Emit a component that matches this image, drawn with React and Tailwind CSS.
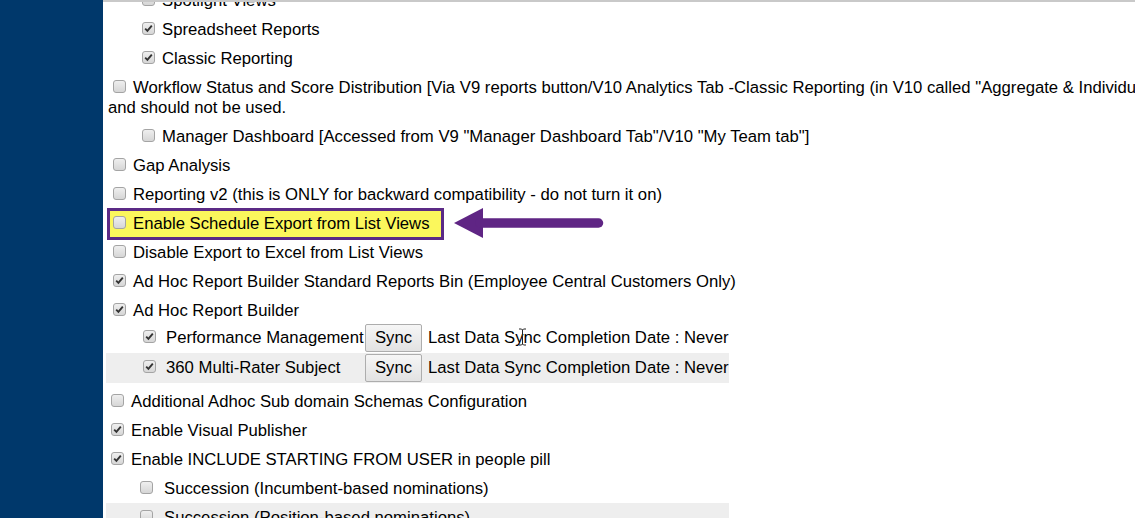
import React from "react";

function Box({ checked, className = "" }) {
  return (
    <span
      className={`inline-flex shrink-0 items-center justify-center w-[13px] h-[13px] rounded-[3px] border border-[#a4a4a4] bg-gradient-to-b from-[#efefef] to-[#d6d6d6] mb-[3px] ${className}`}
    >
      {checked && (
        <svg width="9" height="9" viewBox="0 0 9 9">
          <path d="M1.2 4.6 L3.4 6.8 L7.8 1.6" fill="none" stroke="#333" strokeWidth="1.9" />
        </svg>
      )}
    </span>
  );
}

function Row({ box, gap, checked, children, className = "" }) {
  return (
    <div className={`flex items-center h-[29px] whitespace-nowrap ${className}`}>
      <Box checked={checked} className={box} />
      <span className={gap}>{children}</span>
    </div>
  );
}

function SyncRow({ label, bg }) {
  return (
    <div className={`flex items-center h-[30px] -ml-[2px] w-[623px] whitespace-nowrap ${bg}`}>
      <Box checked className="ml-[37px]" />
      <span className="ml-[10px] w-[199px]">{label}</span>
      <button className="w-[57px] h-[28px] rounded-[2px] border border-[#adadad] bg-gradient-to-b from-[#f6f6f6] to-[#e2e2e2] text-[16.7px] text-black">
        Sync
      </button>
      <span className="ml-[6px]">Last Data Sync Completion Date : Never</span>
    </div>
  );
}

export default function App() {
  return (
    <div className="w-[1135px] h-[518px] overflow-hidden flex bg-white text-black text-[16.7px] leading-[20px] font-['Liberation_Sans',Arial,sans-serif]">
      <div className="w-[103px] shrink-0 bg-[#00386b]" />
      <div className="relative flex-1 overflow-hidden border-t-2 border-[#c9c9c9] pl-[5px]">
        <div className="-mt-[16px] flex flex-col">
          <Row box="ml-[34px]" gap="ml-[7px]">Spotlight Views</Row>
          <Row box="ml-[34px]" gap="ml-[7px]" checked>Spreadsheet Reports</Row>
          <Row box="ml-[34px]" gap="ml-[7px]" checked>Classic Reporting</Row>
          <div className="h-[49px] pt-[4.5px] whitespace-nowrap">
            <div className="flex items-center h-[20px]">
              <Box className="ml-[5px]" />
              <span className="ml-[7px]">
                Workflow Status and Score Distribution [Via V9 reports button/V10 Analytics Tab -Classic Reporting (in V10 called "Aggregate &amp; Individual Reports")] is deprecated
              </span>
            </div>
            <div className="h-[20px]">and should not be used.</div>
          </div>
          <Row box="ml-[34px]" gap="ml-[7px]">
            Manager Dashboard [Accessed from V9 "Manager Dashboard Tab"/V10 "My Team tab"]
          </Row>
          <Row box="ml-[5px]" gap="ml-[7px]">Gap Analysis</Row>
          <Row box="ml-[5px]" gap="ml-[7px]">
            Reporting v2 (this is ONLY for backward compatibility - do not turn it on)
          </Row>
          <div className="flex items-center h-[29px] whitespace-nowrap">
            <div className="-ml-[1px] flex items-center h-[32px] w-[337px] border-[3px] border-[#5b2a86] bg-[#fbf75c]">
              <Box className="ml-[3px] border-[#9c9a48] from-[#e3df58] to-[#cfcb4c]" />
              <span className="ml-[7px]">Enable Schedule Export from List Views</span>
            </div>
          </div>
          <Row box="ml-[5px]" gap="ml-[7px]">Disable Export to Excel from List Views</Row>
          <Row box="ml-[5px]" gap="ml-[7px]" checked>
            Ad Hoc Report Builder Standard Reports Bin (Employee Central Customers Only)
          </Row>
          <Row box="ml-[5px]" gap="ml-[7px]" checked>Ad Hoc Report Builder</Row>
          <div className="-mt-[2px] flex flex-col">
            <SyncRow label="Performance Management" bg="" />
            <SyncRow label="360 Multi-Rater Subject" bg="bg-[#eeeeee]" />
          </div>
          <div className="mt-[4px] flex flex-col">
            <Row box="ml-[3px]" gap="ml-[7px]">Additional Adhoc Sub domain Schemas Configuration</Row>
            <Row box="ml-[3px]" gap="ml-[7px]" checked>Enable Visual Publisher</Row>
            <Row box="ml-[3px]" gap="ml-[7px]" checked>Enable INCLUDE STARTING FROM USER in people pill</Row>
            <Row box="ml-[32px]" gap="ml-[11px]">Succession (Incumbent-based nominations)</Row>
            <Row box="ml-[32px]" gap="ml-[11px]" className="-ml-[2px] pl-[2px] w-[623px] bg-[#eeeeee]">
              Succession (Position-based nominations)
            </Row>
          </div>
        </div>

        <svg className="absolute left-[347px] top-[204px]" width="160" height="36" viewBox="0 0 160 36">
          <polygon points="4,17 33,2 33,32" fill="#5f2584" />
          <line x1="30" y1="17" x2="148.5" y2="17" stroke="#5f2584" strokeWidth="9.5" strokeLinecap="round" />
        </svg>

        <svg className="absolute left-[415px] top-[326px]" width="9" height="18" viewBox="0 0 9 18">
          <path d="M1 1 H3.5 L4.5 2 L5.5 1 H8 M4.5 2 V16 M1 17 H3.5 L4.5 16 L5.5 17 H8" fill="none" stroke="#222" strokeWidth="1" />
        </svg>
      </div>
    </div>
  );
}
